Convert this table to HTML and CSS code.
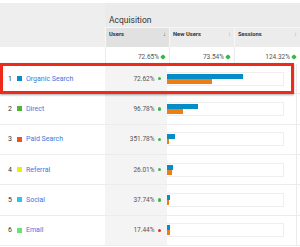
FILE: index.html
```
<!DOCTYPE html>
<html>
<head>
<meta charset="utf-8">
<link rel="stylesheet" href="styles.css">
</head>
<body>
<div class="report">
  <div class="head">
    <div class="corner"></div>
    <div class="group">Acquisition</div>
    <div class="hcell sorted"><span>Users</span><span class="sort dark">↓</span></div>
    <div class="hcell"><span>New Users</span><span class="sort">↕</span></div>
    <div class="hcell"><span>Sessions</span><span class="sort">↕</span></div>
  </div>
  <div class="totals">
    <div class="tlabel"></div>
    <div class="tcell">72.65% <i class="up"></i></div>
    <div class="tcell">73.54% <i class="up"></i></div>
    <div class="tcell">124.32% <i class="up"></i></div>
  </div>
  <div class="row">
    <div class="label"><span class="num">1</span><span class="sw c1"></span><a>Organic Search</a></div>
    <div class="val">72.62% <i class="dot"></i></div>
    <div class="barcell"><div class="bars"><div class="bar blue" style="width:76px"></div><div class="bar orange" style="width:45px"></div></div></div>
  </div>
  <div class="row">
    <div class="label"><span class="num">2</span><span class="sw c2"></span><a>Direct</a></div>
    <div class="val">96.78% <i class="dot"></i></div>
    <div class="barcell"><div class="bars"><div class="bar blue" style="width:31px"></div><div class="bar orange" style="width:16px"></div></div></div>
  </div>
  <div class="row">
    <div class="label"><span class="num">3</span><span class="sw c3"></span><a>Paid Search</a></div>
    <div class="val">351.78% <i class="dot"></i></div>
    <div class="barcell"><div class="bars"><div class="bar blue" style="width:8px"></div><div class="bar orange" style="width:2px"></div></div></div>
  </div>
  <div class="row">
    <div class="label"><span class="num">4</span><span class="sw c4"></span><a>Referral</a></div>
    <div class="val">26.01% <i class="dot"></i></div>
    <div class="barcell"><div class="bars"><div class="bar blue" style="width:6px"></div><div class="bar orange" style="width:5px"></div></div></div>
  </div>
  <div class="row">
    <div class="label"><span class="num">5</span><span class="sw c5"></span><a>Social</a></div>
    <div class="val">37.74% <i class="dot"></i></div>
    <div class="barcell"><div class="bars"><div class="bar blue" style="width:3px"></div><div class="bar orange" style="width:2px"></div></div></div>
  </div>
  <div class="row">
    <div class="label"><span class="num">6</span><span class="sw c6"></span><a>Email</a></div>
    <div class="val">17.44% <i class="dot red"></i></div>
    <div class="barcell"><div class="bars"><div class="bar blue" style="width:3px"></div><div class="bar orange" style="width:3px"></div></div></div>
  </div>
</div>
<div class="highlight"></div>
</body>
</html>
```
FILE: styles.css
```
* { box-sizing: border-box; margin: 0; padding: 0; }
html, body { width: 300px; height: 247px; overflow: hidden; background: #fff; }
body { position: relative; font-family: Roboto, "Liberation Sans", Arial, sans-serif; color: #444; }
.report { padding-top: 3px; }
.head { display: grid; grid-template-columns: 105px 64px 65px 66px; grid-template-rows: 25px 19px; }
.corner { grid-row: 1 / 3; background: #eeeeee; }
.group { grid-column: 2 / 5; background: #ebebeb; font-size: 8.5px; line-height: 10px; color: #333; padding: 12px 0 0 4px; border-bottom: 1px solid #f6f6f6; }
.hcell { background: #ececec; border-left: 1px solid #f7f7f7; display: flex; justify-content: space-between; padding: 2px 3px 0 3px; font-size: 5.8px; line-height: 8px; font-weight: bold; color: #333; }
.hcell.sorted { background: #e1e1e1; }
.sort { font-weight: normal; color: #b5b5b5; font-size: 6px; }
.sort.dark { color: #555; }
.totals { display: grid; grid-template-columns: 105px 64px 65px 66px; height: 17px; }
.tcell { border-left: 1px solid #ebebeb; display: flex; justify-content: flex-end; align-items: center; padding: 2px 4px 0 0; gap: 2px; font-size: 6.5px; color: #555; }
.up { display: inline-block; width: 4px; height: 4px; background: #3cb54a; border-radius: 1px; transform: rotate(45deg); }
.row { display: grid; grid-template-columns: 105px 62px 130px 3px; height: 30.33px; border-bottom: 1px solid #ececec; }
.label { display: flex; align-items: center; padding-left: 8px; font-size: 7px; }
.num { color: #333; width: 9px; }
.sw { width: 5px; height: 5px; margin-right: 4px; }
.c1 { background: #058dc7; }
.c2 { background: #50b432; }
.c3 { background: #ed561b; }
.c4 { background: #edef00; }
.c5 { background: #24cbe5; }
.c6 { background: #64e572; }
.label a { color: #3d78de; }
.val { background: #f4f4f4; display: flex; justify-content: flex-end; align-items: center; gap: 3px; padding-right: 6px; font-size: 6.5px; color: #555; }
.dot { display: inline-block; width: 3.5px; height: 3.5px; border-radius: 50%; background: #3cb54a; }
.dot.red { background: #ee2b2b; }
.barcell { display: flex; align-items: center; border-right: 1px solid #ebebeb; }
.bars { width: 117px; border: 1px solid #eeeeee; border-left: 0; padding: 1px 0; display: flex; flex-direction: column; }
.bar { height: 5px; }
.blue { background: #058dc7; }
.orange { background: #ed7e17; }
.highlight { position: absolute; left: 0; top: 63px; width: 294px; height: 31px; border: 3px solid #ee2a1b; box-shadow: 0 1px 2px rgba(0,0,0,0.35); }
```
